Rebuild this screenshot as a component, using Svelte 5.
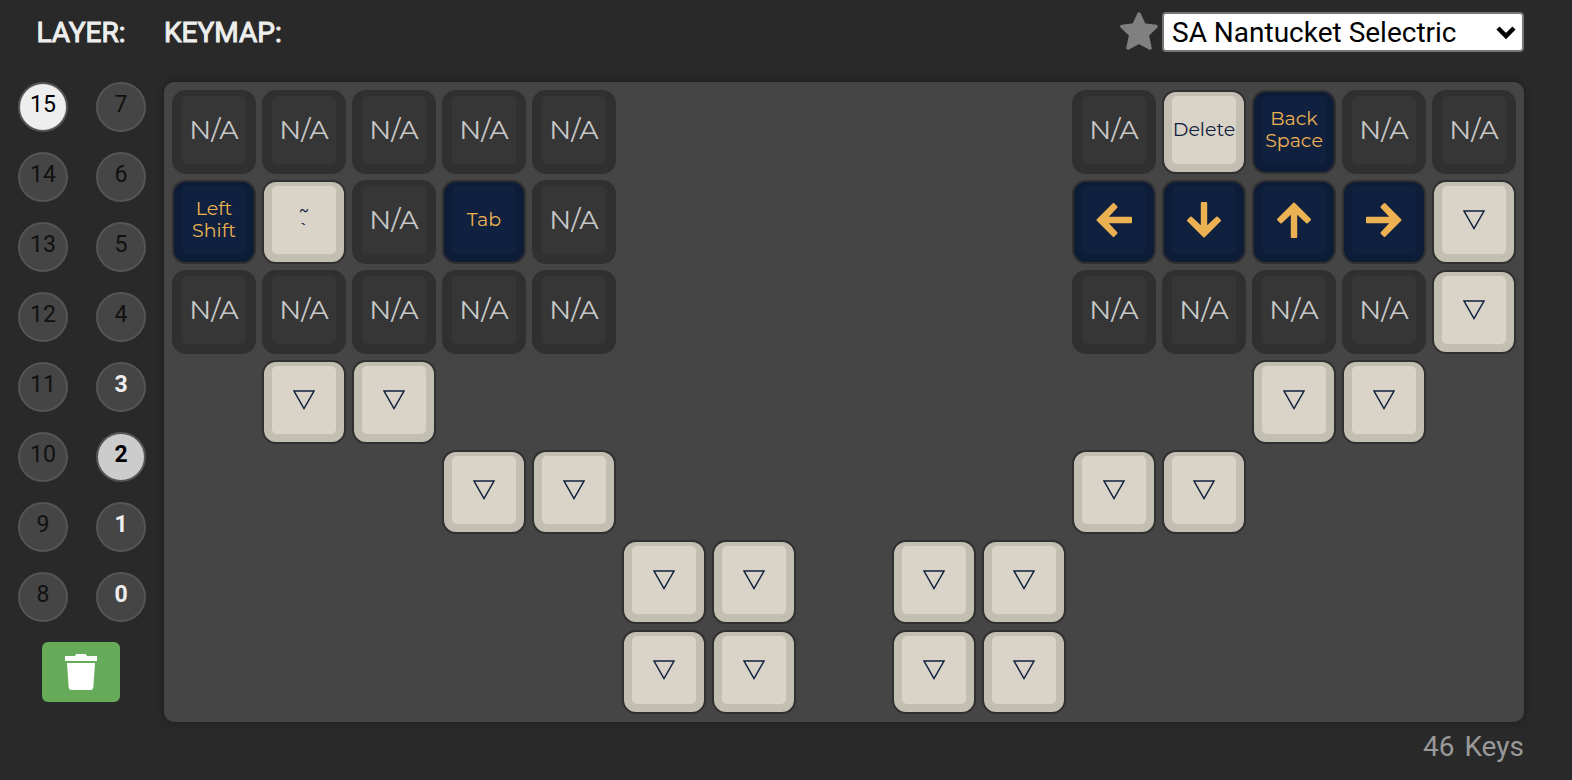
<script>
  const layerRows = [
    [15, 7],
    [14, 6],
    [13, 5],
    [12, 4],
    [11, 3],
    [10, 2],
    [9, 1],
    [8, 0],
  ];
  const usedLayers = [0, 1, 2, 3];
  let hovered = $state(15);
  let active = $state(2);
  let theme = $state('SA Nantucket Selectric');

  // One string per keyboard row, fifteen columns; '.' leaves a gap.
  const legend = {
    n: { kind: 'na', text: ['N/A'] },
    D: { kind: 'alpha', text: ['Delete'] },
    B: { kind: 'mod', text: ['Back', 'Space'] },
    S: { kind: 'mod', text: ['Left', 'Shift'] },
    T: { kind: 'mod', text: ['Tab'] },
    g: { kind: 'alpha', small: true, text: ['~', '`'] },
    v: { kind: 'alpha', icon: 'trns', label: 'Transparent' },
    l: { kind: 'mod', icon: 'arrow', turn: 0, label: 'Left' },
    u: { kind: 'mod', icon: 'arrow', turn: 90, label: 'Up' },
    r: { kind: 'mod', icon: 'arrow', turn: 180, label: 'Right' },
    d: { kind: 'mod', icon: 'arrow', turn: 270, label: 'Down' },
  };
  const rows = [
    'nnnnn.....nDBnn',
    'SgnTn.....ldurv',
    'nnnnn.....nnnnv',
    '.vv.........vv.',
    '...vv.....vv...',
    '.....vv.vv.....',
    '.....vv.vv.....',
  ];
  const keys = rows.flatMap((row, r) =>
    [...row]
      .map((code, c) => ({ ...legend[code], code, row: r + 1, col: c + 1 }))
      .filter((key) => key.code !== '.')
  );
</script>

<div class="page">
  <aside>
    <h2>LAYER:</h2>
    <div class="layers">
      {#each layerRows.flat() as n}
        <button
          class="layer"
          class:used={usedLayers.includes(n)}
          class:hovered={hovered === n}
          class:active={active === n}
          onclick={() => (active = n)}
        >{n}</button>
      {/each}
    </div>
    <button class="clear" aria-label="Clear layer">
      <svg width="32" height="36" viewBox="0 0 32 36" fill="#fff" aria-hidden="true">
        <path d="M0 2H10Q10.500 0 12 0H20Q21.500 0 22 2H32V7H0Z" />
        <path d="M2 9H30L28.300 33.500Q28 36 25.500 36H6.500Q4 36 3.700 33.500Z" />
      </svg>
    </button>
  </aside>

  <main>
    <header>
      <h2>KEYMAP:</h2>
      <div class="theme">
        <button class="star" aria-label="Favorite color scheme">
          <svg width="40" height="40" viewBox="0 0 40 40" aria-hidden="true">
            <path
              d="M20 2L25.100 13L37 14.500L28.200 22.900L31 36L20 30.100L9 36L11.800 22.900L3 14.500L14.900 13Z"
              fill="#808080" stroke="#808080" stroke-width="3.500" stroke-linejoin="round"
            />
          </svg>
        </button>
        <div class="picker">
          <select aria-label="Keymap colors" bind:value={theme}>
            <option>SA Nantucket Selectric</option>
          </select>
          <svg class="caret" width="20" height="14" viewBox="0 0 20 14" aria-hidden="true">
            <path d="M2 2L10 10L18 2" fill="none" stroke="#000" stroke-width="4.500" />
          </svg>
        </div>
      </div>
    </header>

    <div class="board">
      {#each keys as key}
        <button
          class="key {key.kind}"
          class:small={key.small}
          aria-label={key.label}
          style:grid-row={key.row}
          style:grid-column={key.col}
        >
          <span class="face">
            {#if key.icon === 'arrow'}
              <svg width="36" height="36" viewBox="0 0 36 36" aria-hidden="true">
                <path
                  transform="rotate({key.turn} 18 18)"
                  d="M1.500 18L17.500 2L20.500 5L10.500 15.800H35V20.200H10.500L20.500 31L17.500 34Z"
                  fill="currentColor" stroke="currentColor" stroke-width="2" stroke-linejoin="round"
                />
              </svg>
            {:else if key.icon === 'trns'}
              <svg width="22" height="20" viewBox="0 0 22 20" aria-hidden="true">
                <path d="M1 1H21L11 18.500Z" fill="none" stroke="currentColor" stroke-width="1.500" />
              </svg>
            {:else}
              {#each key.text as line}<span>{line}</span>{/each}
            {/if}
          </span>
        </button>
      {/each}
    </div>

    <footer><span>{keys.length}</span><span>Keys</span></footer>
  </main>
</div>

<style>
  :global(body) {
    margin: 0;
    background: #292929;
  }
  .page {
    display: flex;
    gap: 20px;
    padding: 12px 48px 0 18px;
    font-family: Roboto, sans-serif;
    color: #eee;
  }
  button {
    margin: 0;
    padding: 0;
    border: 0;
    background: none;
    color: inherit;
    font: inherit;
    cursor: pointer;
  }
  svg {
    display: block;
  }
  h2 {
    margin: 0;
    font-size: 28px;
    line-height: 42px;
    font-weight: 400;
    -webkit-text-stroke: 1px currentColor;
  }
  aside {
    flex: none;
    width: 126px;
    display: flex;
    flex-direction: column;
    align-items: center;
  }
  .layers {
    align-self: flex-start;
    display: grid;
    grid-template-columns: 50px 50px;
    gap: 20px 28px;
    margin: 28px 0 20px;
  }
  .layer {
    box-sizing: border-box;
    height: 50px;
    padding-bottom: 5px;
    border: 2px solid #555;
    border-radius: 50%;
    background: #454545;
    color: #111;
    font-size: 23px;
    line-height: 40px;
  }
  .layer.used {
    color: #eee;
    font-weight: 700;
  }
  .layer.active {
    background: #ccc;
    color: #000;
  }
  .layer.hovered {
    background: #eee;
    color: #000;
  }
  .clear {
    display: grid;
    place-items: center;
    width: 78px;
    height: 60px;
    border-radius: 6px;
    background: #65ab5a;
  }
  main {
    flex: 1;
    min-width: 0;
  }
  header {
    display: flex;
    justify-content: space-between;
    align-items: flex-start;
  }
  .theme {
    display: flex;
    align-items: center;
    gap: 3px;
  }
  .picker {
    position: relative;
    width: 362px;
  }
  select {
    display: block;
    box-sizing: border-box;
    width: 100%;
    height: 40px;
    padding: 0 40px 0 8px;
    border: 2px solid #767676;
    border-radius: 4px;
    background: #fff;
    color: #000;
    font: 28px/38px Roboto, sans-serif;
    appearance: none;
  }
  .caret {
    position: absolute;
    right: 8px;
    top: 14px;
    pointer-events: none;
  }
  .board {
    display: grid;
    grid-template-columns: repeat(15, minmax(0, 1fr));
    gap: 6px;
    margin-top: 28px;
    padding: 8px;
    border-radius: 10px;
    background: #454545;
    box-shadow: 0 0 8px rgba(0, 0, 0, 0.3);
  }
  .key {
    box-sizing: border-box;
    aspect-ratio: 1;
    display: flex;
    padding: 4px 8px 8px;
    border: 2px solid #303030;
    border-radius: 14px;
    font-family: Montserrat, Inter, sans-serif;
    font-size: 19px;
    line-height: 22px;
    font-weight: 400;
  }
  .face {
    flex: 1;
    min-width: 0;
    align-self: stretch;
    display: flex;
    flex-direction: column;
    align-items: center;
    justify-content: center;
    border-radius: 5px;
  }
  .na {
    background: #303030;
    color: #c8c8c8;
    font-size: 27px;
    line-height: 24px;
  }
  .na .face {
    background: #363636;
  }
  .alpha {
    background: #c2beb2;
    color: #10203f;
  }
  .alpha .face {
    background: #d9d4c7;
  }
  .mod {
    background: #0d1c37;
    color: #ecb252;
  }
  .mod .face {
    background: #10203f;
  }
  .small {
    font-size: 17px;
    line-height: 18px;
    font-weight: 500;
  }
  footer {
    display: flex;
    justify-content: flex-end;
    gap: 10px;
    padding-top: 7px;
    color: #999;
    font-size: 28px;
    line-height: 36px;
  }
</style>
